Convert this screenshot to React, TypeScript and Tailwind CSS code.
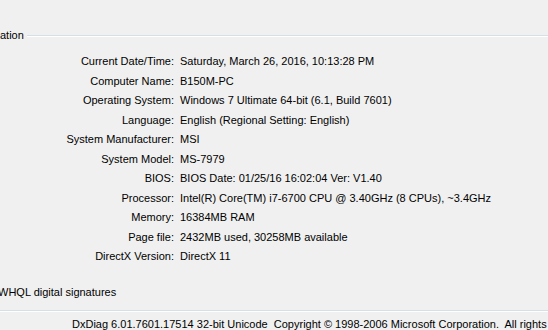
import React from 'react';

const rows: [string, string][] = [
  ['Current Date/Time:', 'Saturday, March 26, 2016, 10:13:28 PM'],
  ['Computer Name:', 'B150M-PC'],
  ['Operating System:', 'Windows 7 Ultimate 64-bit (6.1, Build 7601)'],
  ['Language:', 'English (Regional Setting: English)'],
  ['System Manufacturer:', 'MSI'],
  ['System Model:', 'MS-7979'],
  ['BIOS:', 'BIOS Date: 01/25/16 16:02:04 Ver: V1.40'],
  ['Processor:', 'Intel(R) Core(TM) i7-6700 CPU @ 3.40GHz (8 CPUs), ~3.4GHz'],
  ['Memory:', '16384MB RAM'],
  ['Page file:', '2432MB used, 30258MB available'],
  ['DirectX Version:', 'DirectX 11'],
];

export default function App() {
  return (
    <div className="w-[548px] h-[330px] overflow-hidden bg-[#f0f0f0] text-black text-[11px] font-['Liberation_Sans',Tahoma,sans-serif] leading-none">
      <div className="h-[29px]" />
      {/* group box header */}
      <div className="flex items-center h-[13px]">
        <span className="whitespace-nowrap">ation</span>
        <div className="flex-1 ml-[3px] flex flex-col">
          <div className="h-px bg-[#d5dfe5]" />
          <div className="h-px bg-white" />
        </div>
      </div>

      <div className="mt-[10px] flex flex-col">
        {rows.map(([label, value]) => (
          <div key={label} className="flex items-center h-[19.5px] whitespace-nowrap">
            <span className="w-[174px] text-right shrink-0">{label}</span>
            <span className="ml-[6px]">{value}</span>
          </div>
        ))}
      </div>

      <div className="mt-[20px] ml-[-2px] whitespace-nowrap">WHQL digital signatures</div>

      <div className="mt-[12px] flex flex-col">
        <div className="h-px bg-[#d5dfe5]" />
        <div className="h-px bg-white" />
      </div>
      <div className="mt-[7px] pl-[72px] whitespace-pre">
        {'DxDiag 6.01.7601.17514 32-bit Unicode  Copyright © 1998-2006 Microsoft Corporation.  All rights reserved.'}
      </div>
    </div>
  );
}
